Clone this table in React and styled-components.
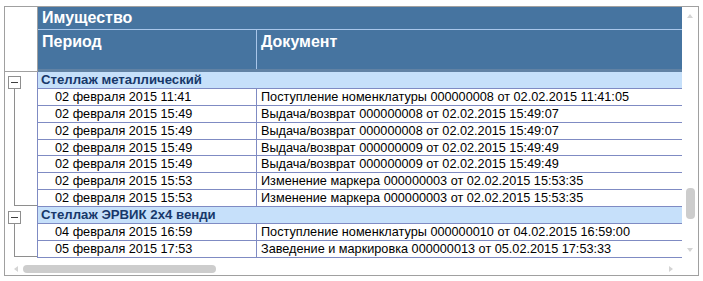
import { Fragment } from "react";
import styled, { createGlobalStyle } from "styled-components";

const groups = [
    {
        name: "Стеллаж металлический",
        rows: [
            ["02 февраля 2015 11:41", "Поступление номенклатуры 000000008 от 02.02.2015 11:41:05"],
            ["02 февраля 2015 15:49", "Выдача/возврат 000000008 от 02.02.2015 15:49:07"],
            ["02 февраля 2015 15:49", "Выдача/возврат 000000008 от 02.02.2015 15:49:07"],
            ["02 февраля 2015 15:49", "Выдача/возврат 000000009 от 02.02.2015 15:49:49"],
            ["02 февраля 2015 15:49", "Выдача/возврат 000000009 от 02.02.2015 15:49:49"],
            ["02 февраля 2015 15:53", "Изменение маркера 000000003 от 02.02.2015 15:53:35"],
            ["02 февраля 2015 15:53", "Изменение маркера 000000003 от 02.02.2015 15:53:35"],
        ],
    },
    {
        name: "Стеллаж ЭРВИК 2х4 венди",
        rows: [
            ["04 февраля 2015 16:59", "Поступление номенклатуры 000000010 от 04.02.2015 16:59:00"],
            ["05 февраля 2015 17:53", "Заведение и маркировка 000000013 от 05.02.2015 17:53:33"],
        ],
    },
];

function App() {
    return (
        <>
            <GlobalStyle />
            <Frame>
                <Body>
                    <Corner />
                    <Header>
                        <HeaderTitle>Имущество</HeaderTitle>
                        <HeaderColumns>
                            <HeaderCell $divider>Период</HeaderCell>
                            <HeaderCell>Документ</HeaderCell>
                        </HeaderColumns>
                    </Header>

                    {groups.map((group) => (
                        <Fragment key={group.name}>
                            <TreeCell>
                                <Toggle />
                                <TreeLine />
                            </TreeCell>
                            <GroupRows>
                                <GroupRow>{group.name}</GroupRow>
                                {group.rows.map(([period, doc], i) => (
                                    <Row key={i}>
                                        <PeriodCell>{period}</PeriodCell>
                                        <DocCell>{doc}</DocCell>
                                    </Row>
                                ))}
                            </GroupRows>
                        </Fragment>
                    ))}
                </Body>

                <VScroll>
                    <Arrow $dir="up" />
                    <VThumb $offset={170} />
                    <VSpacer />
                    <Arrow $dir="down" />
                </VScroll>

                <HScroll>
                    <Arrow $dir="left" />
                    <HThumb />
                    <HSpacer />
                    <Arrow $dir="right" />
                </HScroll>
                <ScrollCorner />
            </Frame>
        </>
    );
}

export default App;

const GlobalStyle = createGlobalStyle`
  body {
    margin: 0;
    background: #ffffff;
    font-family: "Liberation Sans", Arial, sans-serif;
  }
`;

const LINE = "#7f8bc3";

const Frame = styled.div`
  margin: 6px 0 0 4px;
  width: 695px;
  height: 270px;
  box-sizing: border-box;
  border: 1px solid #a0a0a0;
  display: grid;
  grid-template-columns: 677px 16px;
  grid-template-rows: 255px 13px;
  overflow: hidden;
`;

const Body = styled.div`
  display: grid;
  grid-template-columns: 32px 645px;
  grid-auto-rows: min-content;
  overflow: hidden;
`;

const Corner = styled.div`
  height: 65px;
  box-sizing: border-box;
  border-bottom: 1px solid #a0a0a0;
`;

const Header = styled.div`
  height: 65px;
  box-sizing: border-box;
  border-left: 1px solid #a0a0a0;
  background: #4674a0;
  color: #ffffff;
  font-weight: bold;
  font-size: 16px;
`;

const HeaderTitle = styled.div`
  height: 22px;
  line-height: 21px;
  padding-left: 4px;
  border-bottom: 1px solid #a9c6ea;
`;

const HeaderColumns = styled.div`
  display: grid;
  grid-template-columns: 219px 1fr;
  height: 42px;
  box-sizing: border-box;
  border-bottom: 3px solid #6182a4;
`;

const HeaderCell = styled.div`
  padding: 2px 0 0 4px;
  line-height: 19px;
  box-sizing: border-box;
  border-right: ${(p) => (p.$divider ? "1px solid #a9c6ea" : "none")};
`;

const TreeCell = styled.div`
  display: flex;
  flex-direction: column;
  padding-top: 4px;
`;

const Toggle = styled.div`
  position: relative;
  width: 13px;
  height: 13px;
  margin-left: 3px;
  box-sizing: border-box;
  border: 1px solid #8e8e8e;
  background: #ffffff;
  flex: none;

  &::after {
    content: "";
    position: absolute;
    left: 2px;
    right: 2px;
    top: 5px;
    height: 1px;
    background: #404040;
  }
`;

const TreeLine = styled.div`
  flex: 1;
  margin: 0 0 1px 9px;
  border-left: 1px solid #8e8e8e;
  border-bottom: 1px solid #8e8e8e;
`;

const GroupRows = styled.div`
  display: flex;
  flex-direction: column;
`;

const RowBase = styled.div`
  height: 16.9px;
  box-sizing: border-box;
  border-left: 1px solid ${LINE};
  border-bottom: 1px solid ${LINE};
  font-size: 12.7px;
  line-height: 16.4px;
  white-space: nowrap;
  overflow: hidden;
`;

const GroupRow = styled(RowBase)`
  background: #c6e0fa;
  color: #17386a;
  font-weight: bold;
  font-size: 13.2px;
  padding-left: 3px;
`;

const Row = styled(RowBase)`
  display: grid;
  grid-template-columns: 219px 1fr;
  color: #000000;
`;

const PeriodCell = styled.div`
  padding-left: 17px;
  box-sizing: border-box;
  border-right: 1px solid ${LINE};
`;

const DocCell = styled.div`
  padding-left: 4px;
`;

const VScroll = styled.div`
  display: flex;
  flex-direction: column;
  align-items: center;
  padding: 7px 0 10px;
  box-sizing: border-box;
`;

const VThumb = styled.div`
  width: 9px;
  height: 31px;
  border-radius: 4px;
  background: #cdcdcd;
  margin-top: ${(p) => p.$offset}px;
`;

const VSpacer = styled.div`
  flex: 1;
`;

const HScroll = styled.div`
  display: flex;
  align-items: center;
  padding: 0 9px 0 9px;
  box-sizing: border-box;
`;

const HThumb = styled.div`
  width: 193px;
  height: 8px;
  border-radius: 4px;
  background: #cdcdcd;
  margin-left: 5px;
`;

const HSpacer = styled.div`
  flex: 1;
`;

const ScrollCorner = styled.div``;

const arrowShapes = {
    up: "border-left: 3.5px solid transparent; border-right: 3.5px solid transparent; border-bottom: 4px solid #d4d4d4;",
    down: "border-left: 3.5px solid transparent; border-right: 3.5px solid transparent; border-top: 4px solid #d4d4d4;",
    left: "border-top: 3.5px solid transparent; border-bottom: 3.5px solid transparent; border-right: 4px solid #d4d4d4;",
    right: "border-top: 3.5px solid transparent; border-bottom: 3.5px solid transparent; border-left: 4px solid #d4d4d4;",
};

const Arrow = styled.div`
  width: 0;
  height: 0;
  flex: none;
  ${(p) => arrowShapes[p.$dir]}
`;
